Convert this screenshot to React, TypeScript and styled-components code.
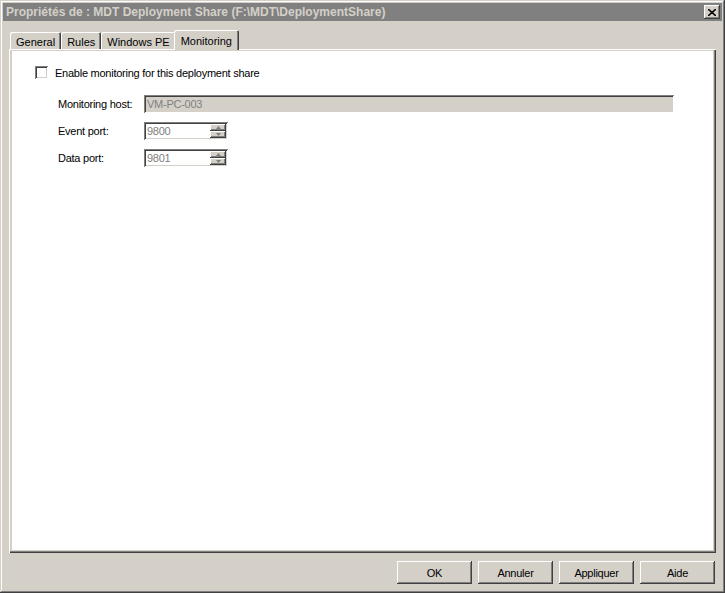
import styled, { createGlobalStyle } from 'styled-components';

const GlobalStyle = createGlobalStyle`
	html, body {
		margin: 0;
		padding: 0;
		background: #d4d0c8;
	}
	body {
		font-family: 'Liberation Sans', Arial, sans-serif;
		font-size: 11px;
		letter-spacing: -0.25px;
		color: #000;
	}
`;

const Window = styled.div`
	width: 725px;
	height: 593px;
	box-sizing: border-box;
	padding: 3px;
	background: #d4d0c8;
	display: flex;
	flex-direction: column;
	box-shadow: inset -1px -1px #404040, inset 1px 1px #d4d0c8, inset -2px -2px #808080, inset 2px 2px #fff;
`;

const TitleBar = styled.div`
	height: 18px;
	background: #808080;
	display: flex;
	align-items: center;
	justify-content: space-between;
	padding: 0 2px 0 3px;
	flex-shrink: 0;
`;

const Title = styled.span`
	color: #d4d0c8;
	font-weight: bold;
	font-size: 12px;
	letter-spacing: 0;
	white-space: nowrap;
`;

const CloseButton = styled.div`
	width: 16px;
	height: 14px;
	box-sizing: border-box;
	background: #d4d0c8;
	display: flex;
	align-items: center;
	justify-content: center;
	box-shadow: inset -1px -1px #404040, inset 1px 1px #fff, inset -2px -2px #808080;
`;

const Body = styled.div`
	flex: 1;
	display: flex;
	flex-direction: column;
	padding: 8px 6px 0 6px;
`;

const TabStrip = styled.div`
	display: flex;
	align-items: flex-end;
	height: 20px;
	padding-left: 1px;
	position: relative;
	z-index: 1;
`;

const Tab = styled.div<{ $active?: boolean }>`
	height: ${(p) => (p.$active ? '20px' : '17px')};
	box-sizing: border-box;
	padding: ${(p) => (p.$active ? '1px 7px 0 7px' : '2px 6px 0 6px')};
	margin: ${(p) => (p.$active ? '0 -1px -1px -2px' : '0')};
	background: #d4d0c8;
	display: flex;
	align-items: center;
	white-space: nowrap;
	letter-spacing: 0;
	box-shadow: inset 1px 1px #fff, inset -1px 0 #404040, inset -2px 0 #808080;
	border-radius: 2px 2px 0 0;
`;

const Panel = styled.div`
	height: 504px;
	box-sizing: border-box;
	padding: 2px 3px 3px 3px;
	background: #d4d0c8;
	box-shadow: inset 1px 1px #fff, inset -1px -1px #404040, inset -2px -2px #808080;
	display: flex;
`;

const PanelBody = styled.div`
	flex: 1;
	background: #fff;
	padding: 15px 0 0 23px;
`;

const CheckRow = styled.label`
	display: flex;
	align-items: center;
	gap: 7px;
	height: 13px;
`;

const CheckBox = styled.span`
	width: 13px;
	height: 13px;
	box-sizing: border-box;
	background: #fff;
	box-shadow: inset 1px 1px #808080, inset -1px -1px #fff, inset 2px 2px #404040, inset -2px -2px #d4d0c8;
`;

const Form = styled.div`
	display: grid;
	grid-template-columns: 86px auto;
	row-gap: 9px;
	align-items: center;
	margin: 16px 0 0 23px;
`;

const FieldLabel = styled.span`
	white-space: nowrap;
`;

const TextBox = styled.div<{ $width: number; $bg: string }>`
	width: ${(p) => p.$width}px;
	height: 18px;
	box-sizing: border-box;
	background: ${(p) => p.$bg};
	color: #808080;
	display: flex;
	align-items: center;
	padding-left: 3px;
	box-shadow: inset 1px 1px #808080, inset -1px -1px #fff, inset 2px 2px #404040, inset -2px -2px #d4d0c8;
	position: relative;
`;

const Spinner = styled.div`
	position: absolute;
	right: 2px;
	top: 2px;
	bottom: 2px;
	width: 16px;
	display: flex;
	flex-direction: column;
`;

const SpinButton = styled.div`
	flex: 1;
	background: #d4d0c8;
	display: flex;
	align-items: center;
	justify-content: center;
	box-shadow: inset -1px -1px #404040, inset 1px 1px #fff, inset -2px -2px #808080;
`;

const Footer = styled.div`
	display: flex;
	justify-content: flex-end;
	gap: 6px;
	padding: 8px 1px 0 0;
`;

const Button = styled.div`
	width: 75px;
	height: 23px;
	box-sizing: border-box;
	background: #d4d0c8;
	display: flex;
	align-items: center;
	justify-content: center;
	box-shadow: inset -1px -1px #404040, inset 1px 1px #fff, inset -2px -2px #808080;
`;

const Arrow = ({ up }: { up?: boolean }) => (
	<svg width="5" height="3" viewBox="0 0 5 3">
		<path d={up ? 'M2.5 0 L5 3 L0 3 Z' : 'M0 0 L5 0 L2.5 3 Z'} fill="#808080" />
	</svg>
);

function SpinBox({ value }: { value: string }) {
	return (
		<TextBox $width={84} $bg="#fff">
			{value}
			<Spinner>
				<SpinButton>
					<Arrow up />
				</SpinButton>
				<SpinButton>
					<Arrow />
				</SpinButton>
			</Spinner>
		</TextBox>
	);
}

export default function App() {
	return (
		<>
			<GlobalStyle />
			<Window>
				<TitleBar>
					<Title>Propriétés de : MDT Deployment Share (F:\MDT\DeploymentShare)</Title>
					<CloseButton>
						<svg width="8" height="7" viewBox="0 0 8 7">
							<path d="M0 0 L8 7 M8 0 L0 7" stroke="#000" strokeWidth="1.6" />
						</svg>
					</CloseButton>
				</TitleBar>
				<Body>
					<TabStrip>
						<Tab>General</Tab>
						<Tab>Rules</Tab>
						<Tab>Windows PE</Tab>
						<Tab $active>Monitoring</Tab>
					</TabStrip>
					<Panel>
						<PanelBody>
							<CheckRow>
								<CheckBox />
								Enable monitoring for this deployment share
							</CheckRow>
							<Form>
								<FieldLabel>Monitoring host:</FieldLabel>
								<TextBox $width={530} $bg="#d4d0c8">VM-PC-003</TextBox>
								<FieldLabel>Event port:</FieldLabel>
								<SpinBox value="9800" />
								<FieldLabel>Data port:</FieldLabel>
								<SpinBox value="9801" />
							</Form>
						</PanelBody>
					</Panel>
					<Footer>
						<Button>OK</Button>
						<Button>Annuler</Button>
						<Button>Appliquer</Button>
						<Button>Aide</Button>
					</Footer>
				</Body>
			</Window>
		</>
	);
}
